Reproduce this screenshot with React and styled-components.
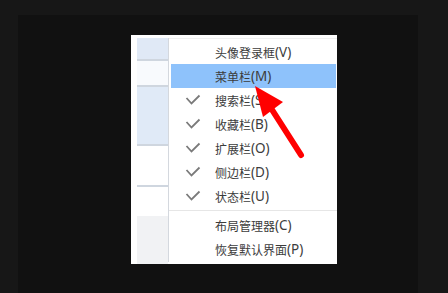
import React from 'react';
import styled, { createGlobalStyle } from 'styled-components';

const Global = createGlobalStyle`
  html, body { margin: 0; padding: 0; background: #171717; }
  body { width: 448px; height: 293px; overflow: hidden; font-family: "Noto Sans CJK SC", "Noto Sans", sans-serif; }
`;

const Stage = styled.div`
  margin: 15px 30px 0 18px;
  height: 278px;
  background: #111111;
  padding: 20px 0 0 113px;
  box-sizing: border-box;
`;

const Panel = styled.div`
  position: relative;
  width: 206px;
  height: 229px;
  background: #ffffff;
  display: flex;
  padding: 3px 0 2px 6px;
  box-sizing: border-box;
`;

const Strip = styled.div`
  width: 31px;
  display: flex;
  flex-direction: column;
  border-right: 1px solid #d4d8de;
`;

const Band = styled.div`
  height: ${(p) => p.h}px;
  background: ${(p) => p.bg};
  border-bottom: ${(p) => (p.line ? '2px solid #cfd6df' : 'none')};
  flex-shrink: 0;
`;

const Menu = styled.div`
  flex: 1;
  display: flex;
  flex-direction: column;
  padding-top: 1px;
  border-top: 1px solid #f0f0f0;
`;

const Item = styled.div`
  height: 24px;
  margin: 0 1px 0 2px;
  display: flex;
  align-items: center;
  background: ${(p) => (p.active ? '#8ec2fb' : 'transparent')};
  color: #3c3c3c;
  font-size: 12px;
`;

const Key = styled.span`
  font-family: "Noto Sans", "Liberation Sans", sans-serif;
  font-size: 13.5px;
`;

const Check = styled.div`
  width: 44px;
  display: flex;
  justify-content: center;
  box-sizing: border-box;
`;

const Sep = styled.div`
  height: 1px;
  background: #e6e6e6;
  margin: 2px 0 2px 0;
`;

const Arrow = styled.svg`
  position: absolute;
  left: 0;
  top: 0;
  pointer-events: none;
`;

const Tick = () => (
  <svg width="16" height="12" viewBox="0 0 16 12">
    <path d="M1.5 4 L6.5 9.5 L14.5 1.5" fill="none" stroke="#7a7a7a" strokeWidth="1.8" />
  </svg>
);

const items = [
  { label: '头像登录框', key: '(V)' },
  { label: '菜单栏', key: '(M)', active: true },
  { label: '搜索栏', key: '(S)', checked: true },
  { label: '收藏栏', key: '(B)', checked: true },
  { label: '扩展栏', key: '(O)', checked: true },
  { label: '侧边栏', key: '(D)', checked: true },
  { label: '状态栏', key: '(U)', checked: true },
];

const bottom = [
  { label: '布局管理器', key: '(C)' },
  { label: '恢复默认界面', key: '(P)' },
];

export default function App() {
  return (
    <>
      <Global />
      <Stage>
        <Panel>
          <Strip>
            <Band h={21} bg="#e0e9f6" line />
            <Band h={24} bg="#f8fafd" line />
            <Band h={57} bg="#e0eaf7" line />
            <Band h={39} bg="#ffffff" line />
            <Band h={29} bg="#ffffff" />
            <Band h={48} bg="#f1f2f4" />
          </Strip>
          <Menu>
            {items.map((it) => (
              <Item key={it.label} active={it.active}>
                <Check>{it.checked ? <Tick /> : null}</Check>
                {it.label}
                <Key>{it.key}</Key>
              </Item>
            ))}
            <Sep />
            {bottom.map((b) => (
              <Item key={b.label}>
                <Check />
                {b.label}
                <Key>{b.key}</Key>
              </Item>
            ))}
          </Menu>
          <Arrow width="206" height="229" viewBox="0 0 206 229">
            <polygon points="124,51 152,67 132,82" fill="#ff0000" />
            <line x1="138" y1="70" x2="170" y2="120" stroke="#ff0000" strokeWidth="6" strokeLinecap="round" />
          </Arrow>
        </Panel>
      </Stage>
    </>
  );
}
